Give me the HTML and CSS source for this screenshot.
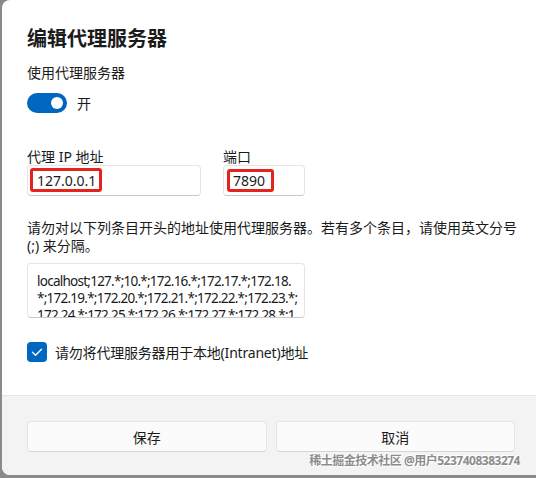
FILE: index.html
```html
<!DOCTYPE html>
<html lang="zh-CN">
<head>
    <meta charset="UTF-8">
    <meta name="viewport" content="width=device-width, initial-scale=1.0">
    <title>编辑代理服务器</title>
    <link rel="stylesheet" href="styles.css">
</head>
<body>

    <div class="dialog">
        <div class="dialog-body">
            <h1 class="dialog-title">编辑代理服务器</h1>

            <p class="section-label">使用代理服务器</p>
            <div class="toggle-row">
                <span class="toggle is-on"><span class="toggle-knob"></span></span>
                <span class="toggle-text">开</span>
            </div>

            <div class="field-row">
                <div class="field field-ip">
                    <label class="field-label">代理 IP 地址</label>
                    <div class="text-box">
                        <span class="text-value">127.0.0.1</span>
                        <span class="mark mark-ip"></span>
                    </div>
                </div>
                <div class="field field-port">
                    <label class="field-label">端口</label>
                    <div class="text-box">
                        <span class="text-value">7890</span>
                        <span class="mark mark-port"></span>
                    </div>
                </div>
            </div>

            <p class="hint">请勿对以下列条目开头的地址使用代理服务器。若有多个条目，请使用英文分号 (;) 来分隔。</p>

            <div class="exceptions">localhost;127.*;10.*;172.16.*;172.17.*;172.18.*;172.19.*;172.20.*;172.21.*;172.22.*;172.23.*;172.24.*;172.25.*;172.26.*;172.27.*;172.28.*;172.29.*;172.30.*;172.31.*;192.168.*</div>

            <div class="check-row">
                <span class="checkbox">
                    <svg viewBox="0 0 20 20" fill="none" stroke="#fff" stroke-width="1.4" stroke-linecap="round" stroke-linejoin="round">
                        <path d="M5.5 10.3l3 2.9 6-6"/>
                    </svg>
                </span>
                <span class="check-text">请勿将代理服务器用于本地(Intranet)地址</span>
            </div>
        </div>

        <div class="dialog-footer">
            <button class="btn">保存</button>
            <button class="btn">取消</button>
            <span class="watermark">稀土掘金技术社区 @用户5237408383274</span>
        </div>
    </div>

</body>
</html>
```

FILE: styles.css
```css
/* --- Base --- */
* {
    margin: 0;
    padding: 0;
    box-sizing: border-box;
}

body {
    font-family: "Noto Sans", "Noto Sans CJK SC", sans-serif;
    font-size: 14px;
    color: #1b1b1b;
    background-color: #8a8a8a;
    height: 478px;
    overflow: hidden;
}

/* --- Dialog shell --- */
.dialog {
    margin-left: 2px;
    width: 534px;
    height: 475px;
    background: #fff;
    border-radius: 8px 0 0 8px;
    display: flex;
    flex-direction: column;
    overflow: hidden;
}

.dialog-body {
    flex: 1;
    padding: 25px 18px 0 25px;
}

.dialog-title {
    font-size: 20px;
    line-height: 28px;
    font-weight: 600;
}

.section-label {
    margin-top: 10px;
    line-height: 20px;
}

/* --- Toggle switch --- */
.toggle-row {
    margin-top: 10px;
    display: flex;
    align-items: center;
    height: 20px;
}
.toggle {
    width: 40px;
    height: 20px;
    border-radius: 10px;
    background: #0067c0;
    display: flex;
    align-items: center;
    justify-content: flex-end;
    padding-right: 4px;
}
.toggle-knob {
    width: 12px;
    height: 12px;
    border-radius: 50%;
    background: #fff;
}
.toggle-text {
    margin-left: 10px;
}

/* --- IP / port fields --- */
.field-row {
    margin-top: 36px;
    display: flex;
    gap: 22px;
}
.field-ip { width: 174px; }
.field-port { width: 82px; }

.field-label {
    display: block;
    line-height: 16px;
}
.text-box {
    position: relative;
    height: 31px;
    border: 1px solid #e5e5e5;
    border-bottom-color: #c9c9c9;
    border-radius: 4px;
    display: flex;
    align-items: center;
    padding-left: 9px;
}

/* red annotation frames drawn over the values */
.mark {
    position: absolute;
    border: 3px solid #e3231c;
    border-radius: 3px;
}
.mark-ip {
    left: 2px;
    top: 2px;
    width: 72px;
    height: 24px;
}
.mark-port {
    left: 3px;
    top: 3px;
    width: 47px;
    height: 23px;
}

/* --- Exceptions --- */
.hint {
    margin-top: 23px;
    line-height: 18px;
}

.exceptions {
    margin-top: 8px;
    width: 278px;
    height: 55px;
    border: 1px solid #e5e5e5;
    border-bottom-color: #c9c9c9;
    border-radius: 4px;
    padding: 9px 6px 0 9px;
    font-size: 13.5px;
    line-height: 17px;
    letter-spacing: -0.75px;
    word-break: break-all;
    overflow: hidden;
}

/* --- Checkbox --- */
.check-row {
    margin-top: 24px;
    display: flex;
    align-items: center;
}
.checkbox {
    width: 20px;
    height: 20px;
    border-radius: 4px;
    background: #0067c0;
    display: flex;
}
.checkbox svg {
    width: 20px;
    height: 20px;
}
.check-text {
    margin-left: 8px;
    letter-spacing: -0.2px;
}

/* --- Footer --- */
.dialog-footer {
    position: relative;
    height: 80px;
    background: #f3f3f3;
    border-top: 1px solid #e5e5e5;
    padding: 25px 21px 0 25px;
    display: grid;
    grid-template-columns: 1fr 1fr;
    gap: 9px;
    align-items: start;
}
.btn {
    height: 31px;
    font: inherit;
    color: #1b1b1b;
    background: #fbfbfb;
    border: 1px solid #e5e5e5;
    border-bottom-color: #d5d5d5;
    border-radius: 4px;
}

.watermark {
    position: absolute;
    right: 16px;
    bottom: 6px;
    font-size: 12px;
    letter-spacing: -0.5px;
    font-weight: 700;
    color: #8c8c8c;
    text-shadow: 0 0 1px #fff, 1px 1px 0 #fff, -1px -1px 0 #fff;
    white-space: nowrap;
}
```
